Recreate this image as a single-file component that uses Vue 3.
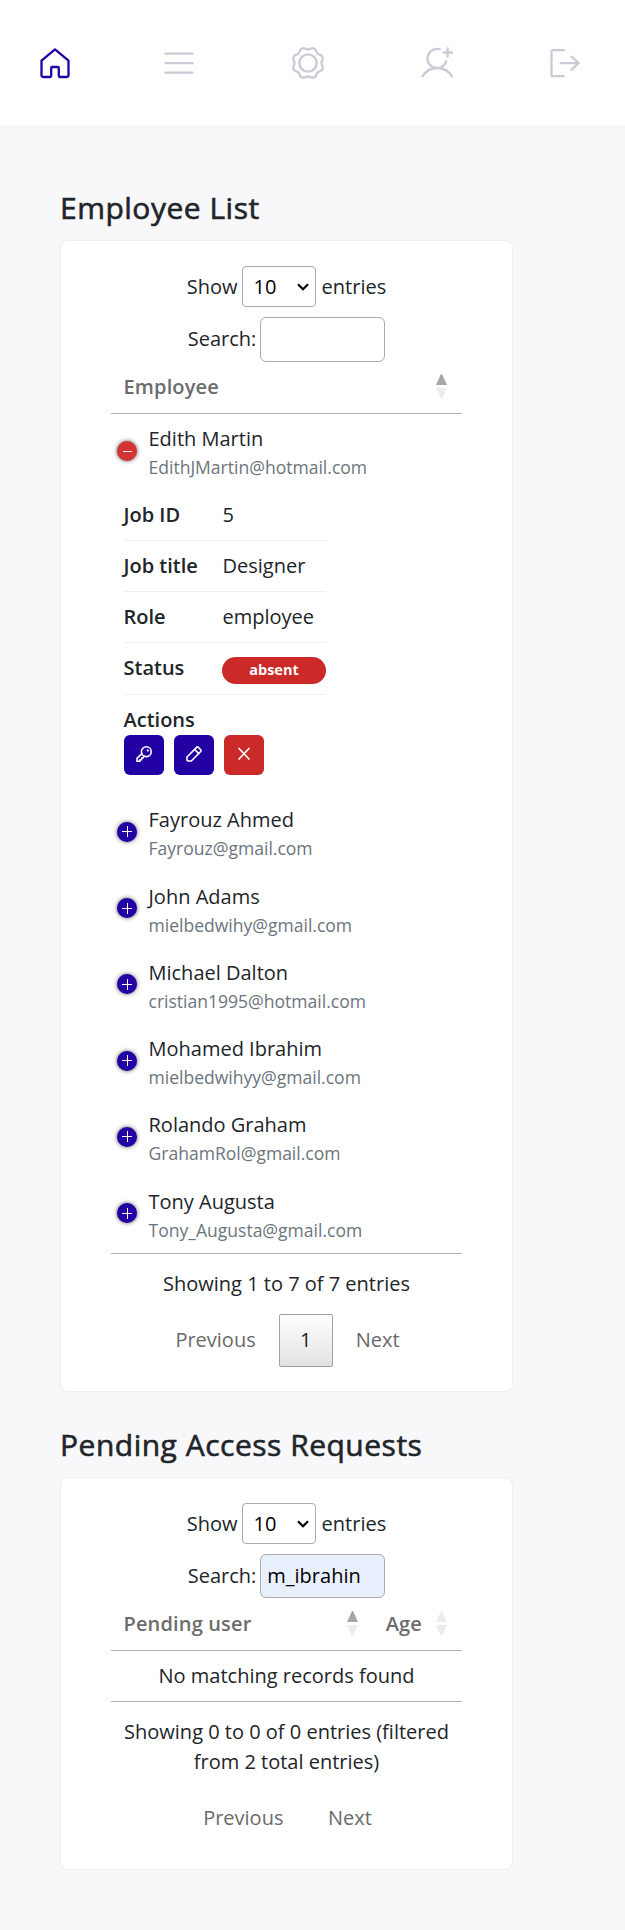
<script setup>
import { ref } from 'vue'

const employeeQuery = ref('')
const pendingQuery = ref('m_ibrahin')

const expanded = { name: 'Edith Martin', email: 'EdithJMartin@hotmail.com' }
const details = [
  { label: 'Job ID', value: '5' },
  { label: 'Job title', value: 'Designer' },
  { label: 'Role', value: 'employee' },
]
const employees = [
  { name: 'Fayrouz Ahmed', email: 'Fayrouz@gmail.com' },
  { name: 'John Adams', email: 'mielbedwihy@gmail.com' },
  { name: 'Michael Dalton', email: 'cristian1995@hotmail.com' },
  { name: 'Mohamed Ibrahim', email: 'mielbedwihyy@gmail.com' },
  { name: 'Rolando Graham', email: 'GrahamRol@gmail.com' },
  { name: 'Tony Augusta', email: 'Tony_Augusta@gmail.com' },
]

// Scalloped outline of the settings gear: eight lobes around a 32-unit box.
const gear = (() => {
  const pts = []
  for (let i = 0; i <= 160; i++) {
    const a = (i / 160) * Math.PI * 2
    const r = 14.6 - 1.1 * Math.cos(8 * a)
    pts.push(`${(16 + r * Math.cos(a)).toFixed(2)} ${(16 + r * Math.sin(a)).toFixed(2)}`)
  }
  return `M${pts.join('L')}Z`
})()
</script>

<template>
  <div class="page">
    <nav class="nav">
      <a class="active">
        <svg viewBox="0 0 32 32"><path d="M2.500 13.600 16 2.400l13.500 11.200V28.500a1.500 1.500 0 0 1-1.500 1.500h-7.200a1 1 0 0 1-1-1V21a1 1 0 0 0-1-1h-5.600a1 1 0 0 0-1 1v8a1 1 0 0 1-1 1H4A1.500 1.500 0 0 1 2.500 28.500Z" /></svg>
      </a>
      <a><svg viewBox="0 0 32 32"><path d="M2.500 6.700h27M2.500 16.200h27M2.500 25.600h27" /></svg></a>
      <a><svg viewBox="0 0 32 32"><path :d="gear" /><circle cx="16" cy="16" r="8.700" /></svg></a>
      <a><svg viewBox="0 0 32 32"><path d="M18.800 2.300A9.600 9.600 0 1 0 25.300 14.300M1.500 29.400C5 23.500 10 21 16.300 21S27.500 23.500 30.800 29.400M26.600 1.500v8M22.500 5.500h8.500" /></svg></a>
      <a><svg viewBox="0 0 32 32"><path d="M14.800 3.200H4a1.500 1.500 0 0 0-1.500 1.500v23A1.500 1.500 0 0 0 4 29.200h10.800M11.600 16.200h18M22.500 9.600 29.500 16.200l-7 6.600" /></svg></a>
    </nav>

    <main>
      <h3>Employee List</h3>
      <section class="card card-employees">
        <label class="length">
          <span>Show</span>
          <span class="select">10
            <svg viewBox="0 0 12 8"><path d="m1 1.300 5 4.900 5-4.900" /></svg>
          </span>
          <span>entries</span>
        </label>
        <label class="search"><span>Search:</span><input v-model="employeeQuery" type="text" /></label>
        <div class="head">
          <span class="head-label">Employee</span>
          <i class="sort asc"></i>
        </div>

        <div class="row first">
          <span class="toggle open"></span>
          <div><p class="name">{{ expanded.name }}</p><p class="email">{{ expanded.email }}</p></div>
        </div>
        <div class="details">
          <div v-for="d in details" :key="d.label" class="detail">
            <b>{{ d.label }}</b><span>{{ d.value }}</span>
          </div>
          <div class="detail status"><b>Status</b><span class="badge">absent</span></div>
          <div class="actions-label"><b>Actions</b></div>
          <div class="actions">
            <button>
              <svg viewBox="0 0 16 16"><circle cx="10.300" cy="5.700" r="4.900" /><path d="M5.800 7.700 1 12.400v3h2.900v-1.700h1.700v-1.700h1.300l1.400-1.700M11.300 4.200h.7v.7" /></svg>
            </button>
            <button>
              <svg viewBox="0 0 16 16"><path d="M1 11 10.600 1.400q.9-.9 1.800 0l2.300 2.300q.9.9 0 1.800L5.300 15H2q-1 0-1-1ZM8.600 3.400l4.200 4.200" /></svg>
            </button>
            <button class="danger">
              <svg viewBox="0 0 16 16"><path d="m3 2.500 10 10.500m0-10.500-10 10.500" /></svg>
            </button>
          </div>
        </div>
        <div v-for="e in employees" :key="e.email" class="row">
          <span class="toggle"></span>
          <div><p class="name">{{ e.name }}</p><p class="email">{{ e.email }}</p></div>
        </div>
        <div class="rule"></div>
        <p class="info">Showing 1 to 7 of 7 entries</p>
        <div class="pager"><span>Previous</span><span class="current">1</span><span>Next</span></div>
      </section>

      <h3>Pending Access Requests</h3>
      <section class="card card-pending">
        <label class="length">
          <span>Show</span>
          <span class="select">10
            <svg viewBox="0 0 12 8"><path d="m1 1.300 5 4.900 5-4.900" /></svg>
          </span>
          <span>entries</span>
        </label>
        <label class="search"><span>Search:</span><input v-model="pendingQuery" class="filled" type="text" /></label>
        <div class="head">
          <span class="head-label">Pending user</span>
          <i class="sort asc"></i>
          <span class="age">Age</span>
          <i class="sort"></i>
        </div>
        <p class="empty">No matching records found</p>
        <p class="info">Showing 0 to 0 of 0 entries (filtered<br />from 2 total entries)</p>
        <div class="pager"><span>Previous</span><span>Next</span></div>
      </section>
    </main>
  </div>
</template>

<style>
body {
  margin: 0;
  background: #f8f8fb;
}
</style>

<style scoped>
.page {
  height: 1930px;
  font: 400 20px/30px "Open Sans", "Noto Sans", sans-serif;
  color: #212529;
  background: #f8f8fb;
}
.page * { box-sizing: border-box; }
p { margin: 0; }
svg {
  fill: none;
  stroke: currentColor;
  stroke-linecap: round;
  stroke-linejoin: round;
}
.nav {
  height: 125px;
  padding-left: 38.500px;
  display: grid;
  grid-template-columns: 124px 129px 129px 128.500px 32px;
  align-items: center;
  background: #fff;
  color: #cbcad7;
}
.nav a { display: flex; }
.nav svg { width: 32px; height: 32px; stroke-width: 2.300; }
.nav .active { color: #2200a3; }
main { padding: 66px 0 0 60px; }
h3 {
  margin: 0;
  height: 49px;
  font-size: 30px;
  font-weight: 400;
  line-height: 34px;
  letter-spacing: 0.500px;
  -webkit-text-stroke: 0.600px currentColor;
}
.card {
  width: 453px;
  padding: 25px 50px 0;
  border: 1px solid #efeff1;
  border-radius: 8px;
  background: #fff;
}
.card-employees { height: 1152px; margin-bottom: 36px; }
.card-pending { height: 393px; }
.length, .search {
  display: flex;
  justify-content: center;
}
.length { height: 41px; gap: 5px; align-items: center; }
.select {
  width: 74px;
  height: 41px;
  margin: 0 1px 0 -1px;
  padding: 0 6px 0 11px;
  display: flex;
  align-items: center;
  justify-content: space-between;
  border: 1px solid #aaa;
  border-radius: 4px;
  color: #000;
}
.select svg { width: 12px; height: 8px; stroke-width: 2.200; stroke-linecap: butt; stroke-linejoin: miter; }
.search { margin-top: 10px; height: 45px; gap: 4px; line-height: 43px; }
.search input {
  width: 125px;
  height: 45px;
  padding: 0 6px 1px;
  border: 1px solid #aaa;
  border-radius: 6px;
  background: #fff;
  color: #000;
  font: inherit;
  outline: none;
}
.search .filled { height: 44px; background: #e8f0fe; }
.head {
  height: 52px;
  padding: 0 15px 2px 12.500px;
  display: flex;
  align-items: center;
  border-bottom: 1px solid #b0b0b0;
  color: #6c6c6c;
  font-weight: 600;
  letter-spacing: 0.150px;
}
.head-label { margin-right: auto; }
.age { margin: 0 14px 0 28px; }
.sort {
  width: 11px;
  height: 25px;
  display: flex;
  flex-direction: column;
  justify-content: space-between;
}
.sort::before, .sort::after {
  content: "";
  border: 5.500px solid transparent;
}
.sort::before { border-top: 0; border-bottom: 11px solid #ececec; }
.sort::after { border-bottom: 0; border-top: 11px solid #ececec; }
.sort.asc::before { border-bottom-color: #a6a6a6; }
.row {
  height: 76.250px;
  padding: 10.500px 0 0 6px;
  display: flex;
  gap: 11.500px;
}
.row.first { padding-top: 9.500px; }
.name { height: 29px; }
.email { font-size: 17.550px; line-height: 28px; color: #6c757d; }
.toggle {
  width: 20px;
  height: 20px;
  margin-top: 16.500px;
  border-radius: 50%;
  background:
    linear-gradient(#fff, #fff) center / 10px 1px no-repeat,
    linear-gradient(#fff, #fff) center / 1px 11px no-repeat,
    #2200a3;
  box-shadow: 0 0 4px #555;
}
.toggle.open {
  margin-top: 17.500px;
  background: linear-gradient(#fff, #fff) center / 9px 1px no-repeat, #d33333;
}
.details { height: 304.500px; padding: 0 0 0 12.500px; }
.details b { font-weight: 600; }
.detail {
  width: 202px;
  height: 51px;
  padding-top: 10px;
  display: grid;
  grid-template-columns: 99px 1fr;
  border-bottom: 1px solid #efefef;
}
.status { height: 52px; grid-template-columns: 98px 104px; }
.badge {
  height: 27px;
  margin-top: 4px;
  padding-left: 1px;
  border-radius: 14px;
  background: #cc2929;
  color: #fff;
  font-size: 14.500px;
  font-weight: 700;
  line-height: 25px;
  text-align: center;
}
.actions-label { height: 40px; padding-top: 10px; }
.actions { display: flex; gap: 10px; }
.actions button {
  width: 40px;
  height: 40px;
  padding: 0 0 2px;
  display: grid;
  place-items: center;
  border: 0;
  border-radius: 6px;
  background: #2200a3;
  color: #fff;
}
.actions .danger { background: #cc2929; }
.actions svg { width: 16px; height: 16px; stroke-width: 1.600; }
.actions .danger svg { stroke-width: 1.700; }
.rule { height: 1px; margin-top: 1px; background: #b0b0b0; }
.info { padding-top: 15px; text-align: center; }
.pager {
  height: 52px;
  margin-top: 15px;
  padding-left: 2px;
  display: flex;
  align-items: center;
  justify-content: center;
  gap: 23px;
  color: #6a6a6a;
}
.pager .current {
  width: 54px;
  height: 53px;
  border: 1px solid #a0a0a0;
  border-radius: 2px;
  background: linear-gradient(#fff, #e2e2e2);
  color: #222;
  line-height: 50px;
  text-align: center;
}
.empty {
  height: 51px;
  padding-top: 10px;
  border-bottom: 1px solid #b0b0b0;
  text-align: center;
}
.card-pending .pager { gap: 44.500px; }
</style>
